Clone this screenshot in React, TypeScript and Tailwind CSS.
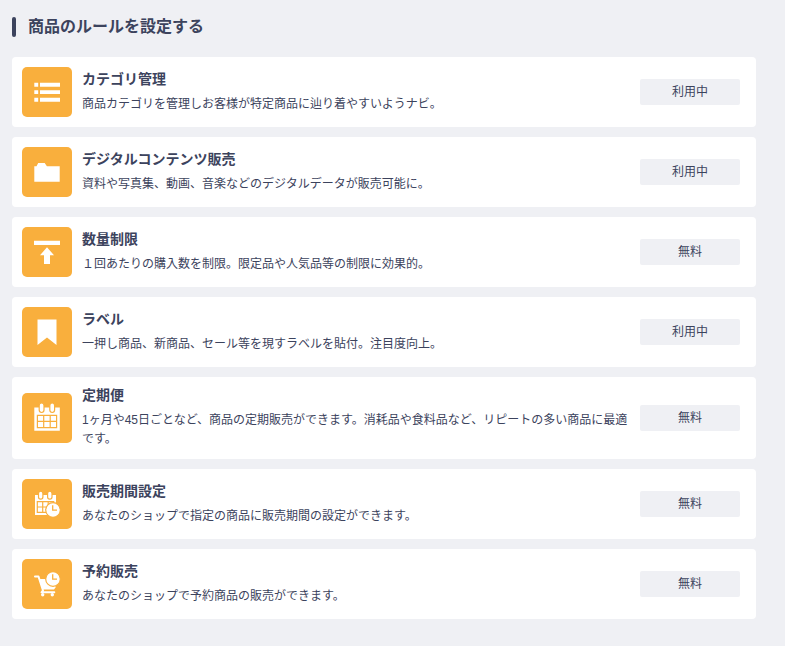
import type { ReactNode } from "react";

interface Rule {
  title: string;
  description: string;
  status: string;
  icon: ReactNode;
}

const ListIcon = () => (
  <svg viewBox="0 0 50 50" className="size-full" fill="white" aria-hidden="true">
    <path d="M12.3 15.800h3.900v3.900h-3.900zM18 15.800h20v3.900H18zM12.300 23.200h3.900v3.900h-3.900zM18 23.200h20v3.900H18zM12.300 30.800h3.900v3.900h-3.900zM18 30.800h20v3.900H18z" />
  </svg>
);

const FolderIcon = () => (
  <svg viewBox="0 0 50 50" className="size-full" fill="white" aria-hidden="true">
    <path d="M12.3 34.700V19.200h2.200l1.700-3.200h6.500l2.200 3.200h12.800v15.500z" />
  </svg>
);

const LimitIcon = () => (
  <svg viewBox="0 0 50 50" className="size-full" fill="white" aria-hidden="true">
    <path d="M12 13.800h26v4.200H12zM25 20.300l7 8h-4V37h-6v-8.700h-4z" />
  </svg>
);

const LabelIcon = () => (
  <svg viewBox="0 0 50 50" className="size-full" fill="white" aria-hidden="true">
    <path d="M15.500 12.500h19V38L25 30.500 15.500 38z" />
  </svg>
);

const CalendarIcon = () => (
  <svg viewBox="0 0 50 50" className="size-full" aria-hidden="true">
    <path fill="white" d="M12.300 14.500h25.500v23.300h-25.500z" />
    <g fill="white" stroke="#f9af3d" strokeWidth="1.200">
      <rect x="17.200" y="10" width="4.800" height="9.500" rx="2.400" />
      <rect x="27.800" y="10" width="4.800" height="9.500" rx="2.400" />
    </g>
    <path
      fill="none"
      stroke="#f9af3d"
      strokeWidth="1.200"
      d="M15.400 22.400h19.200v12.200H15.400zM15.400 28.400h19.200M21.700 22.400v12.200M28.200 22.400v12.200"
    />
  </svg>
);

const PeriodIcon = () => (
  <svg viewBox="0 0 50 50" className="size-full" aria-hidden="true">
    <path fill="white" d="M13 16h21v20H13z" />
    <g fill="white" stroke="#f9af3d" strokeWidth="1.200">
      <rect x="16.500" y="12.200" width="4.400" height="8" rx="2.200" />
      <rect x="25.600" y="12.200" width="4.400" height="8" rx="2.200" />
    </g>
    <path
      fill="none"
      stroke="#f9af3d"
      strokeWidth="1.200"
      d="M15.300 22.600h16.400v10.800H15.300zM15.300 28h16.400M20.700 22.600v10.800M26.200 22.600v10.800"
    />
    <circle cx="31" cy="31" r="7.300" fill="white" stroke="#f9af3d" strokeWidth="1.200" />
    <path fill="none" stroke="#f9af3d" strokeWidth="1.300" d="M30.700 26.200v5h4.300" />
  </svg>
);

const ReserveIcon = () => (
  <svg viewBox="0 0 50 50" className="size-full" aria-hidden="true">
    <path
      fill="none"
      stroke="white"
      strokeWidth="2"
      strokeLinecap="round"
      strokeLinejoin="round"
      d="M13 17.500h3.500L21 31.500l-1.500 1.800h12.800"
    />
    <path fill="white" d="M17 20h16.500v8.500L32 30.500H20.300z" />
    <circle cx="20.700" cy="35.800" r="1.700" fill="white" />
    <circle cx="30.300" cy="35.800" r="1.700" fill="white" />
    <circle cx="31" cy="20" r="7.300" fill="white" stroke="#f9af3d" strokeWidth="1.200" />
    <path fill="none" stroke="#f9af3d" strokeWidth="1.300" d="M30.700 15.200v5h4.300" />
  </svg>
);

const rules: Rule[] = [
  {
    title: "カテゴリ管理",
    description: "商品カテゴリを管理しお客様が特定商品に辿り着やすいようナビ。",
    status: "利用中",
    icon: <ListIcon />,
  },
  {
    title: "デジタルコンテンツ販売",
    description: "資料や写真集、動画、音楽などのデジタルデータが販売可能に。",
    status: "利用中",
    icon: <FolderIcon />,
  },
  {
    title: "数量制限",
    description: "１回あたりの購入数を制限。限定品や人気品等の制限に効果的。",
    status: "無料",
    icon: <LimitIcon />,
  },
  {
    title: "ラベル",
    description: "一押し商品、新商品、セール等を現すラベルを貼付。注目度向上。",
    status: "利用中",
    icon: <LabelIcon />,
  },
  {
    title: "定期便",
    description:
      "1ヶ月や45日ごとなど、商品の定期販売ができます。消耗品や食料品など、リピートの多い商品に最適です。",
    status: "無料",
    icon: <CalendarIcon />,
  },
  {
    title: "販売期間設定",
    description: "あなたのショップで指定の商品に販売期間の設定ができます。",
    status: "無料",
    icon: <PeriodIcon />,
  },
  {
    title: "予約販売",
    description: "あなたのショップで予約商品の販売ができます。",
    status: "無料",
    icon: <ReserveIcon />,
  },
];

const RuleCard: React.FC<{ rule: Rule }> = ({ rule }) => {
  return (
    <li className="flex items-center gap-2.5 rounded bg-white py-2.5 pr-4 pl-2.5">
      <div className="size-[50px] shrink-0 overflow-hidden rounded-[5px] bg-[#f9af3d]">
        {rule.icon}
      </div>
      <div className="min-w-0 flex-1">
        <h2 className="mb-2 text-sm leading-4 font-bold">{rule.title}</h2>
        <p className="text-xs leading-[19px]">{rule.description}</p>
      </div>
      <button
        type="button"
        className="h-[26px] w-[100px] shrink-0 rounded-xs bg-[#eff0f4] text-xs"
      >
        {rule.status}
      </button>
    </li>
  );
};

const App: React.FC = () => {
  return (
    <main className="min-h-screen bg-[#eff0f4] pt-[17px] pr-[29px] pb-[27px] pl-3 font-['Liberation_Sans','Noto_Sans_CJK_JP',sans-serif] text-[#3c435d]">
      <div className="mb-5 flex items-center gap-3">
        <span className="h-5 w-1 rounded-xs bg-[#3c435d]" />
        <h1 className="text-base leading-5 font-bold">商品のルールを設定する</h1>
      </div>
      <ul className="flex flex-col gap-2.5">
        {rules.map((rule) => (
          <RuleCard key={rule.title} rule={rule} />
        ))}
      </ul>
    </main>
  );
};

export default App;
